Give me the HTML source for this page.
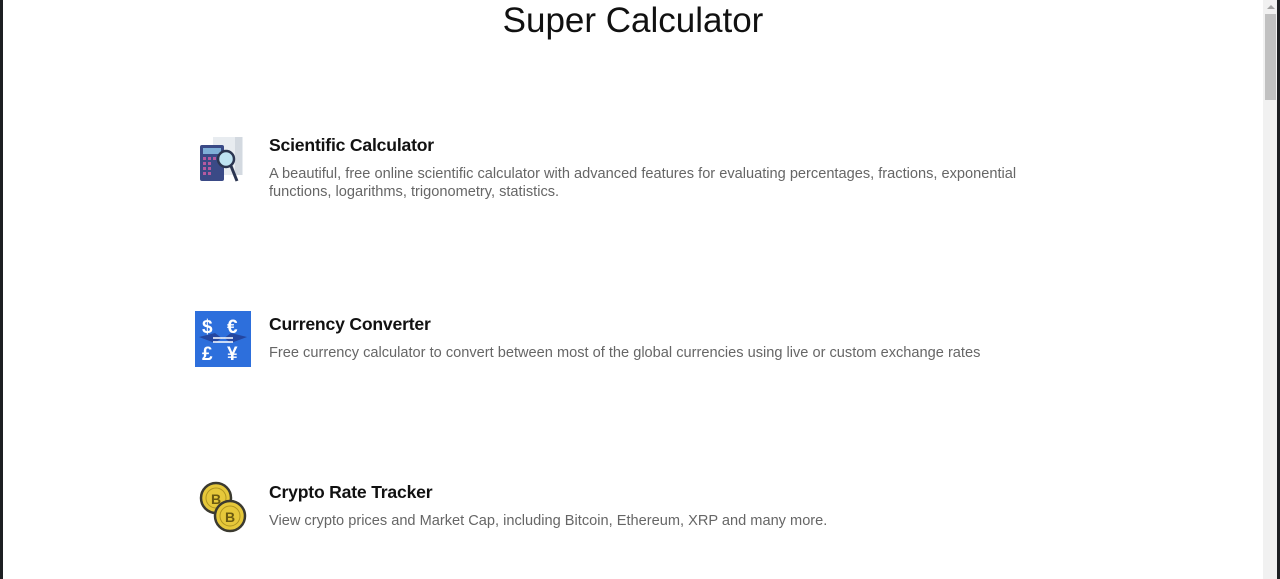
<!DOCTYPE html>
<html><head><meta charset="utf-8"><style>
html,body{margin:0;padding:0;width:1280px;height:579px;overflow:hidden;background:#fff;font-family:"Liberation Sans",sans-serif;}
.lb{position:absolute;left:0;top:0;width:3px;height:579px;background:#1d1f22;}
.rb{position:absolute;right:0;top:0;width:3px;height:579px;background:#1d1f22;}
.sb{position:absolute;left:1263px;top:0;width:14px;height:579px;background:#f1f1f1;}
.th{position:absolute;left:1265px;top:14px;width:11px;height:86px;background:#c1c1c1;}
.ar{position:absolute;left:1267px;top:5px;width:0;height:0;border-left:4px solid transparent;border-right:4px solid transparent;border-bottom:4px solid #a3a3a3;}
h1{position:absolute;left:0;width:1266px;top:0;margin:0;text-align:center;font-weight:400;font-size:35px;line-height:42px;color:#111;}
.it{position:absolute;left:195px;}
.it svg{position:absolute;left:0;top:0;}
.it h2{position:absolute;left:74px;top:2px;margin:0;font-size:17.6px;font-weight:700;color:#111;white-space:nowrap;letter-spacing:-0.2px;}
.it p{position:absolute;left:74px;top:32px;margin:0;width:800px;font-size:14.6px;line-height:18px;color:#666;}
</style></head><body>
<div class="lb"></div><div class="sb"></div><div class="th"></div><div class="ar"></div><div class="rb"></div>
<h1>Super Calculator</h1>

<div class="it" style="top:133px">
<svg width="56" height="56" viewBox="0 0 56 56" style="top:2px">
<rect x="18" y="2" width="30" height="38" fill="#e8ecf0"/><rect x="40" y="2" width="7" height="38" fill="#d3d9e0"/>
<rect x="5" y="10" width="24" height="36" rx="2" fill="#3a4a86"/>
<rect x="8" y="13" width="18" height="6" fill="#7fb0d8"/>
<g fill="#b45aa0"><rect x="8" y="22" width="3" height="3"/><rect x="13" y="22" width="3" height="3"/><rect x="18" y="22" width="3" height="3"/><rect x="8" y="27" width="3" height="3"/><rect x="13" y="27" width="3" height="3"/><rect x="8" y="32" width="3" height="3"/><rect x="13" y="32" width="3" height="3"/><rect x="8" y="37" width="3" height="3"/><rect x="13" y="37" width="3" height="3"/></g>
<circle cx="31" cy="24" r="8" fill="#bfe3f2" stroke="#2b3550" stroke-width="2.5"/>
<line x1="36" y1="31" x2="42" y2="46" stroke="#2b3550" stroke-width="3"/>
</svg>
<h2>Scientific Calculator</h2>
<p>A beautiful, free online scientific calculator with advanced features for evaluating percentages, fractions, exponential functions, logarithms, trigonometry, statistics.</p>
</div>

<div class="it" style="top:312px">
<svg width="56" height="56" viewBox="0 0 56 56" style="top:-1px">
<rect width="56" height="56" fill="#2d6fdc"/>
<path d="M4 26 L20 22 L28 28 L36 22 L52 26 L36 32 L28 26 L20 32Z" fill="#2446a0"/>
<g fill="#fff" font-family="Liberation Sans" font-weight="700" font-size="19"><text x="7" y="22">$</text><text x="32" y="22">€</text><text x="7" y="49">£</text><text x="32" y="49">¥</text></g>
<path d="M18 27 H38 M18 31 H38" stroke="#fff" stroke-width="1.5"/>
</svg>
<h2>Currency Converter</h2>
<p>Free currency calculator to convert between most of the global currencies using live or custom exchange rates</p>
</div>

<div class="it" style="top:480px">
<svg width="56" height="56" viewBox="0 0 56 56" style="top:0">
<circle cx="21" cy="18" r="15" fill="#e6c83a" stroke="#3b3a30" stroke-width="2.5"/>
<circle cx="21" cy="18" r="10" fill="none" stroke="#b09520" stroke-width="1"/>
<text x="16" y="24" font-family="Liberation Sans" font-weight="700" font-size="14" fill="#6b5a10">B</text>
<circle cx="35" cy="36" r="15" fill="#e6c83a" stroke="#3b3a30" stroke-width="2.5"/>
<circle cx="35" cy="36" r="10" fill="none" stroke="#b09520" stroke-width="1"/>
<text x="30" y="42" font-family="Liberation Sans" font-weight="700" font-size="14" fill="#6b5a10">B</text>
</svg>
<h2>Crypto Rate Tracker</h2>
<p>View crypto prices and Market Cap, including Bitcoin, Ethereum, XRP and many more.</p>
</div>
</body></html>
